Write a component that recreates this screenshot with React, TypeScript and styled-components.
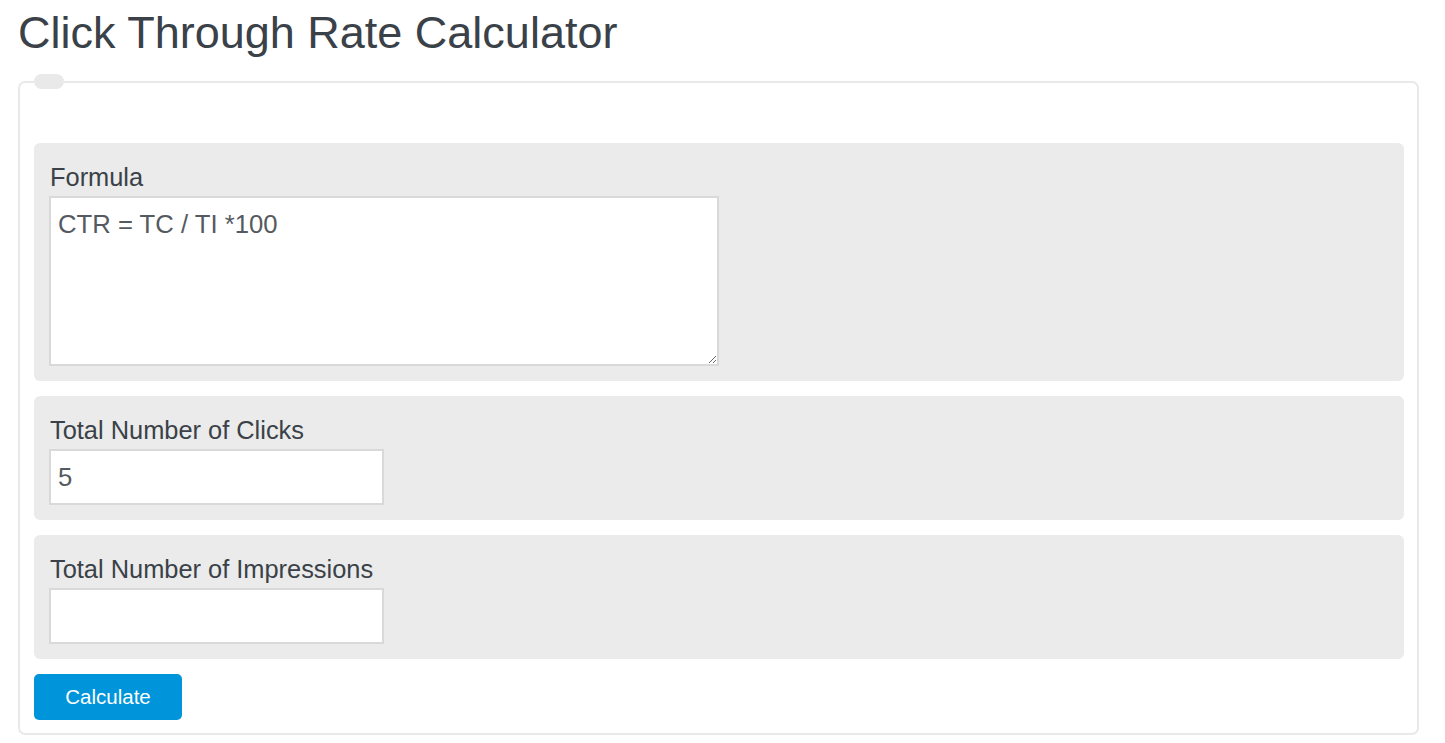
import React, { useState } from "react"
import styled, { createGlobalStyle } from "styled-components"

const GlobalStyle = createGlobalStyle`
  html, body {
    margin: 0;
    padding: 0;
    background: #ffffff;
    font-family: "Liberation Sans", Arial, sans-serif;
  }
`

const Page = styled.div`
  padding: 0 26px 0 18px;
`

const Title = styled.h1`
  margin: 7px 0 0;
  font-size: 45px;
  line-height: 52px;
  font-weight: 400;
  color: #3a4148;
`

const Card = styled.fieldset`
  margin: 15px 0 0;
  padding: 54px 13px 13px 14px;
  border: 2px solid #e9e9e9;
  border-radius: 7px;
  min-width: 0;
`

const Tab = styled.legend`
  width: 30px;
  height: 15px;
  padding: 0;
  margin-left: 0;
  background: #e9e9e9;
  border-radius: 8px;
`

const Stack = styled.div`
  display: flex;
  flex-direction: column;
  align-items: flex-start;
  gap: 15px;
`

const Panel = styled.div`
  align-self: stretch;
  display: flex;
  flex-direction: column;
  align-items: flex-start;
  padding: 15px;
  background: #eaebea;
  border-radius: 6px;
`

const Label = styled.label`
  font-size: 25.4px;
  line-height: 38px;
  color: #3a4148;
  padding-left: 1px;
`

const Area = styled.textarea`
  box-sizing: border-box;
  width: 670px;
  height: 170px;
  margin: 0;
  padding: 8px 7px;
  border: 2px solid #d9d9d9;
  border-radius: 0;
  background: #ffffff;
  font-family: "Liberation Sans", Arial, sans-serif;
  font-size: 25.7px;
  line-height: 37px;
  color: #555a60;
  resize: both;
  outline: none;
`

const Field = styled.input`
  box-sizing: border-box;
  width: 335px;
  height: 56px;
  margin: 0;
  padding: 0 7px;
  border: 2px solid #d9d9d9;
  border-radius: 0;
  background: #ffffff;
  font-family: "Liberation Sans", Arial, sans-serif;
  font-size: 25.7px;
  color: #555a60;
  outline: none;
`

const Button = styled.button`
  width: 148px;
  height: 46px;
  border: none;
  border-radius: 5px;
  background: #0095da;
  color: #ffffff;
  font-family: "Liberation Sans", Arial, sans-serif;
  font-size: 20.5px;
  cursor: pointer;
`

const App: React.FC = () => {
  const [clicks, setClicks] = useState("5")
  const [impressions, setImpressions] = useState("")

  return (
    <>
      <GlobalStyle />
      <Page>
        <Title>Click Through Rate Calculator</Title>
        <Card>
          <Tab />
          <Stack>
            <Panel>
              <Label>Formula</Label>
              <Area defaultValue="CTR = TC / TI *100" />
            </Panel>
            <Panel>
              <Label>Total Number of Clicks</Label>
              <Field value={clicks} onChange={(e) => setClicks(e.target.value)} />
            </Panel>
            <Panel>
              <Label>Total Number of Impressions</Label>
              <Field
                value={impressions}
                onChange={(e) => setImpressions(e.target.value)}
              />
            </Panel>
            <Button type="button">Calculate</Button>
          </Stack>
        </Card>
      </Page>
    </>
  )
}

export default App
